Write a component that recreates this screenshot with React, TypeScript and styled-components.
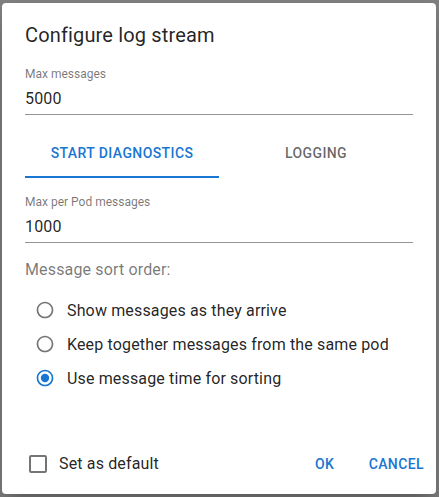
import { useState } from 'react';
import styled, { createGlobalStyle } from 'styled-components';

const colors = {
  primary: '#1976d2',
  text: 'rgba(0, 0, 0, 0.87)',
  secondary: 'rgba(0, 0, 0, 0.54)',
  tabIdle: 'rgba(0, 0, 0, 0.6)',
  line: 'rgba(0, 0, 0, 0.42)',
};

const sortOptions = [
  { id: 'arrival', label: 'Show messages as they arrive' },
  { id: 'pod', label: 'Keep together messages from the same pod' },
  { id: 'time', label: 'Use message time for sorting' },
];

const tabs = ['Start diagnostics', 'Logging'];

const GlobalStyle = createGlobalStyle`
  html, body {
    margin: 0;
    padding: 0;
  }
  body {
    font-family: Roboto, 'Liberation Sans', Arial, sans-serif;
    background: #7f7f7f;
  }
  * {
    box-sizing: border-box;
  }
`;

const Backdrop = styled.div`
  width: 439px;
  height: 497px;
  padding: 3px 3px 3px 2px;
  background: #7f7f7f;
`;

const DialogPaper = styled.div`
  width: 434px;
  height: 491px;
  background: #fff;
  border-radius: 4px;
  display: flex;
  flex-direction: column;
  box-shadow: 0 11px 15px -7px rgba(0, 0, 0, 0.2), 0 24px 38px 3px rgba(0, 0, 0, 0.14);
`;

const Title = styled.h2`
  margin: 0;
  padding: 16px 23px;
  font-size: 20px;
  font-weight: 400;
  line-height: 32px;
  color: ${colors.text};
  letter-spacing: 0.0075em;
`;

const Content = styled.div`
  padding: 0 23px;
  display: flex;
  flex-direction: column;
`;

const Field = styled.label`
  display: flex;
  flex-direction: column;
`;

const FieldLabel = styled.span`
  font-size: 12px;
  line-height: 12px;
  margin-top: 1px;
  color: ${colors.secondary};
`;

const FieldInput = styled.input`
  border: none;
  border-bottom: 1px solid ${colors.line};
  outline: none;
  padding: 9px 0 6px;
  font-family: inherit;
  font-size: 16px;
  line-height: 19px;
  height: 35px;
  letter-spacing: 0.15px;
  color: ${colors.text};
  background: transparent;
`;

const TabBar = styled.div`
  display: flex;
  margin: 15px 0 17px;
`;

const Tab = styled.button<{ $active: boolean }>`
  flex: 0 0 194px;
  height: 48px;
  border: none;
  background: transparent;
  font-family: inherit;
  font-size: 14px;
  font-weight: 500;
  letter-spacing: 0.02857em;
  text-transform: uppercase;
  color: ${(p) => (p.$active ? colors.primary : colors.tabIdle)};
  border-bottom: 2px solid ${(p) => (p.$active ? colors.primary : 'transparent')};
  padding: 0;
  cursor: pointer;
`;

const GroupLabel = styled.div`
  margin-top: 15px;
  font-size: 16px;
  line-height: 24px;
  letter-spacing: 0.15px;
  color: ${colors.secondary};
`;

const RadioList = styled.div`
  display: flex;
  flex-direction: column;
  margin-top: 11px;
  padding-left: 10px;
`;

const RadioRow = styled.label`
  display: flex;
  align-items: center;
  height: 34px;
  gap: 12px;
  font-size: 16px;
  letter-spacing: 0.15px;
  color: ${colors.text};
  cursor: pointer;
`;

const Footer = styled.div`
  margin-top: auto;
  display: flex;
  align-items: center;
  padding: 0 4px 5px 24px;
  height: 56px;
`;

const CheckRow = styled.label`
  display: flex;
  align-items: center;
  gap: 9px;
  font-size: 16px;
  letter-spacing: 0.15px;
  color: ${colors.text};
  flex: 1;
  cursor: pointer;
`;

const Actions = styled.div`
  display: flex;
  gap: 4px;
`;

const TextButton = styled.button`
  min-width: 64px;
  padding: 6px 8px;
  border: none;
  background: transparent;
  font-family: inherit;
  font-size: 14px;
  font-weight: 500;
  line-height: 24px;
  letter-spacing: 0.02857em;
  text-transform: uppercase;
  color: ${colors.primary};
  cursor: pointer;
`;

const RadioIcon = ({ checked }: { checked: boolean }) => (
  <svg width="20" height="20" viewBox="0 0 24 24" fill={checked ? colors.primary : colors.secondary}>
    <path d="M12 2C6.48 2 2 6.48 2 12s4.48 10 10 10 10-4.48 10-10S17.52 2 12 2zm0 18c-4.42 0-8-3.58-8-8s3.58-8 8-8 8 3.58 8 8-3.58 8-8 8z" />
    {checked && <circle cx="12" cy="12" r="5" />}
  </svg>
);

const CheckboxIcon = () => (
  <svg width="24" height="24" viewBox="0 0 24 24" fill={colors.secondary}>
    <path d="M19 5v14H5V5h14m0-2H5c-1.1 0-2 .9-2 2v14c0 1.1.9 2 2 2h14c1.1 0 2-.9 2-2V5c0-1.1-.9-2-2-2z" />
  </svg>
);

const App = () => {
  const [activeTab, setActiveTab] = useState(0);
  const [sortOrder, setSortOrder] = useState('time');

  return (
    <>
      <GlobalStyle />
      <Backdrop>
        <DialogPaper>
          <Title>Configure log stream</Title>
          <Content>
            <Field>
              <FieldLabel>Max messages</FieldLabel>
              <FieldInput defaultValue="5000" />
            </Field>
            <TabBar>
              {tabs.map((tab, i) => (
                <Tab key={tab} $active={activeTab === i} onClick={() => setActiveTab(i)}>
                  {tab}
                </Tab>
              ))}
            </TabBar>
            <Field>
              <FieldLabel>Max per Pod messages</FieldLabel>
              <FieldInput defaultValue="1000" />
            </Field>
            <GroupLabel>Message sort order:</GroupLabel>
            <RadioList>
              {sortOptions.map((opt) => (
                <RadioRow key={opt.id} onClick={() => setSortOrder(opt.id)}>
                  <RadioIcon checked={sortOrder === opt.id} />
                  {opt.label}
                </RadioRow>
              ))}
            </RadioList>
          </Content>
          <Footer>
            <CheckRow>
              <CheckboxIcon />
              Set as default
            </CheckRow>
            <Actions>
              <TextButton>OK</TextButton>
              <TextButton>Cancel</TextButton>
            </Actions>
          </Footer>
        </DialogPaper>
      </Backdrop>
    </>
  );
};

export default App;
